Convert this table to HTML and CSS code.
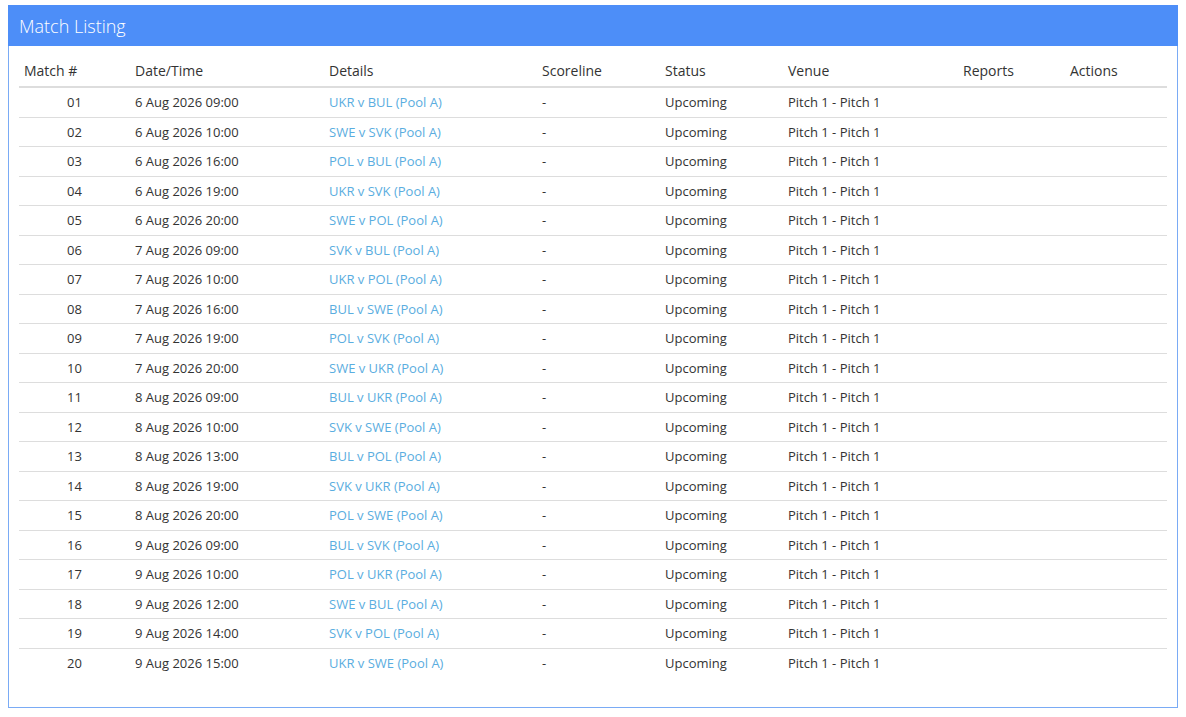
FILE: index.html
```html
<!DOCTYPE html>
<html>
<head>
<meta charset="utf-8">
<link rel="stylesheet" href="styles.css">
</head>
<body>
<div class="panel">
  <div class="panel-heading">Match Listing</div>
  <div class="panel-body">
    <table class="matches">
      <colgroup>
        <col class="c-num"><col class="c-date"><col class="c-details"><col class="c-score"><col class="c-status"><col class="c-venue"><col class="c-reports"><col class="c-actions">
      </colgroup>
      <thead>
        <tr><th>Match #</th><th>Date/Time</th><th>Details</th><th>Scoreline</th><th>Status</th><th>Venue</th><th>Reports</th><th>Actions</th></tr>
      </thead>
      <tbody>
        <tr><td class="num">01</td><td>6 Aug 2026 09:00</td><td><a href="#">UKR v BUL (Pool A)</a></td><td>-</td><td>Upcoming</td><td>Pitch 1 - Pitch 1</td><td></td><td></td></tr>
        <tr><td class="num">02</td><td>6 Aug 2026 10:00</td><td><a href="#">SWE v SVK (Pool A)</a></td><td>-</td><td>Upcoming</td><td>Pitch 1 - Pitch 1</td><td></td><td></td></tr>
        <tr><td class="num">03</td><td>6 Aug 2026 16:00</td><td><a href="#">POL v BUL (Pool A)</a></td><td>-</td><td>Upcoming</td><td>Pitch 1 - Pitch 1</td><td></td><td></td></tr>
        <tr><td class="num">04</td><td>6 Aug 2026 19:00</td><td><a href="#">UKR v SVK (Pool A)</a></td><td>-</td><td>Upcoming</td><td>Pitch 1 - Pitch 1</td><td></td><td></td></tr>
        <tr><td class="num">05</td><td>6 Aug 2026 20:00</td><td><a href="#">SWE v POL (Pool A)</a></td><td>-</td><td>Upcoming</td><td>Pitch 1 - Pitch 1</td><td></td><td></td></tr>
        <tr><td class="num">06</td><td>7 Aug 2026 09:00</td><td><a href="#">SVK v BUL (Pool A)</a></td><td>-</td><td>Upcoming</td><td>Pitch 1 - Pitch 1</td><td></td><td></td></tr>
        <tr><td class="num">07</td><td>7 Aug 2026 10:00</td><td><a href="#">UKR v POL (Pool A)</a></td><td>-</td><td>Upcoming</td><td>Pitch 1 - Pitch 1</td><td></td><td></td></tr>
        <tr><td class="num">08</td><td>7 Aug 2026 16:00</td><td><a href="#">BUL v SWE (Pool A)</a></td><td>-</td><td>Upcoming</td><td>Pitch 1 - Pitch 1</td><td></td><td></td></tr>
        <tr><td class="num">09</td><td>7 Aug 2026 19:00</td><td><a href="#">POL v SVK (Pool A)</a></td><td>-</td><td>Upcoming</td><td>Pitch 1 - Pitch 1</td><td></td><td></td></tr>
        <tr><td class="num">10</td><td>7 Aug 2026 20:00</td><td><a href="#">SWE v UKR (Pool A)</a></td><td>-</td><td>Upcoming</td><td>Pitch 1 - Pitch 1</td><td></td><td></td></tr>
        <tr><td class="num">11</td><td>8 Aug 2026 09:00</td><td><a href="#">BUL v UKR (Pool A)</a></td><td>-</td><td>Upcoming</td><td>Pitch 1 - Pitch 1</td><td></td><td></td></tr>
        <tr><td class="num">12</td><td>8 Aug 2026 10:00</td><td><a href="#">SVK v SWE (Pool A)</a></td><td>-</td><td>Upcoming</td><td>Pitch 1 - Pitch 1</td><td></td><td></td></tr>
        <tr><td class="num">13</td><td>8 Aug 2026 13:00</td><td><a href="#">BUL v POL (Pool A)</a></td><td>-</td><td>Upcoming</td><td>Pitch 1 - Pitch 1</td><td></td><td></td></tr>
        <tr><td class="num">14</td><td>8 Aug 2026 19:00</td><td><a href="#">SVK v UKR (Pool A)</a></td><td>-</td><td>Upcoming</td><td>Pitch 1 - Pitch 1</td><td></td><td></td></tr>
        <tr><td class="num">15</td><td>8 Aug 2026 20:00</td><td><a href="#">POL v SWE (Pool A)</a></td><td>-</td><td>Upcoming</td><td>Pitch 1 - Pitch 1</td><td></td><td></td></tr>
        <tr><td class="num">16</td><td>9 Aug 2026 09:00</td><td><a href="#">BUL v SVK (Pool A)</a></td><td>-</td><td>Upcoming</td><td>Pitch 1 - Pitch 1</td><td></td><td></td></tr>
        <tr><td class="num">17</td><td>9 Aug 2026 10:00</td><td><a href="#">POL v UKR (Pool A)</a></td><td>-</td><td>Upcoming</td><td>Pitch 1 - Pitch 1</td><td></td><td></td></tr>
        <tr><td class="num">18</td><td>9 Aug 2026 12:00</td><td><a href="#">SWE v BUL (Pool A)</a></td><td>-</td><td>Upcoming</td><td>Pitch 1 - Pitch 1</td><td></td><td></td></tr>
        <tr><td class="num">19</td><td>9 Aug 2026 14:00</td><td><a href="#">SVK v POL (Pool A)</a></td><td>-</td><td>Upcoming</td><td>Pitch 1 - Pitch 1</td><td></td><td></td></tr>
        <tr><td class="num">20</td><td>9 Aug 2026 15:00</td><td><a href="#">UKR v SWE (Pool A)</a></td><td>-</td><td>Upcoming</td><td>Pitch 1 - Pitch 1</td><td></td><td></td></tr>
      </tbody>
    </table>
  </div>
</div>
</body>
</html>
```
FILE: styles.css
```css
html, body {
  background: #ffffff;
}
body {
  margin: 5px 8px 0 8px;
  font-family: "Open Sans", "Liberation Sans", sans-serif;
  font-size: 13px;
  line-height: 18.5px;
  color: #333333;
}
.panel {
  border: 1px solid #7aabf5;
  background: #ffffff;
}
.panel-heading {
  background: #4d8ef8;
  color: #ffffff;
  font-size: 18px;
  font-weight: 300;
  line-height: 20px;
  padding: 10px 10px;
  margin: -1px -1px 0 -1px;
  border: 1px solid #4d8ef8;
  border-bottom: none;
}
.panel-body {
  padding: 10px;
}
.matches {
  width: 100%;
  border-collapse: collapse;
  border-spacing: 0;
  table-layout: fixed;
  margin-bottom: 20px;
}
.c-num { width: 111px; }
.c-date { width: 194px; }
.c-details { width: 213px; }
.c-score { width: 123px; }
.c-status { width: 123px; }
.c-venue { width: 175px; }
.c-reports { width: 107px; }
.c-actions { width: 102px; }
.matches th {
  text-align: left;
  font-weight: 400;
  font-size: 14px;
  line-height: 20px;
  padding: 5px;
  border-bottom: 2px solid #dddddd;
  color: #333333;
}
.matches td {
  padding: 5px;
  line-height: 18.5px;
  border-top: 1px solid #dddddd;
  vertical-align: top;
}
.matches tbody tr:first-child td {
  border-top: none;
}
.matches td.num {
  text-align: center;
}
.matches a {
  color: #5aade0;
  text-decoration: none;
}
```
